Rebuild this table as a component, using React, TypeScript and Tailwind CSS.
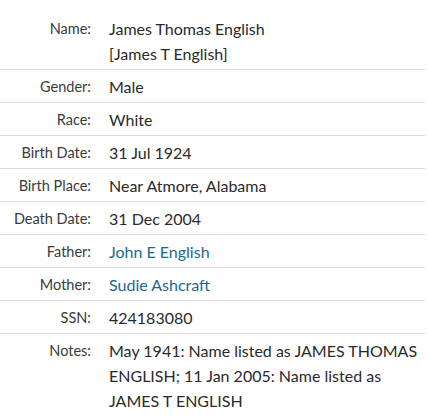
import React from "react";

type Row = { label: string; value: React.ReactNode; link?: boolean };

const rows: Row[] = [
  {
    label: "Name:",
    value: (
      <>
        James Thomas English
        <br />
        [James T English]
      </>
    ),
  },
  { label: "Gender:", value: "Male" },
  { label: "Race:", value: "White" },
  { label: "Birth Date:", value: "31 Jul 1924" },
  { label: "Birth Place:", value: "Near Atmore, Alabama" },
  { label: "Death Date:", value: "31 Dec 2004" },
  { label: "Father:", value: "John E English", link: true },
  { label: "Mother:", value: "Sudie Ashcraft", link: true },
  { label: "SSN:", value: "424183080" },
  {
    label: "Notes:",
    value:
      "May 1941: Name listed as JAMES THOMAS ENGLISH; 11 Jan 2005: Name listed as JAMES T ENGLISH",
  },
];

const App = () => {
  return (
    <div className="min-h-screen bg-white pt-[12px] font-['Lato','Liberation_Sans',sans-serif]">
      <div className="w-[425px]">
        {rows.map((row, i) => (
          <div
            key={row.label}
            className={`flex gap-[18px] pt-[4px] pb-[3px] ${
              i < rows.length - 1 ? "border-b border-[#dddddd]" : ""
            }`}
          >
            <div className="w-[91px] shrink-0 text-right text-[14.5px] leading-[25px] text-[#3a3a3a]">
              {row.label}
            </div>
            <div
              className={`w-[312px] text-[16px] leading-[25px] ${
                row.link ? "text-[#1c6a8a]" : "text-[#2a2a2a]"
              }`}
            >
              {row.value}
            </div>
          </div>
        ))}
      </div>
    </div>
  );
};

export default App;
